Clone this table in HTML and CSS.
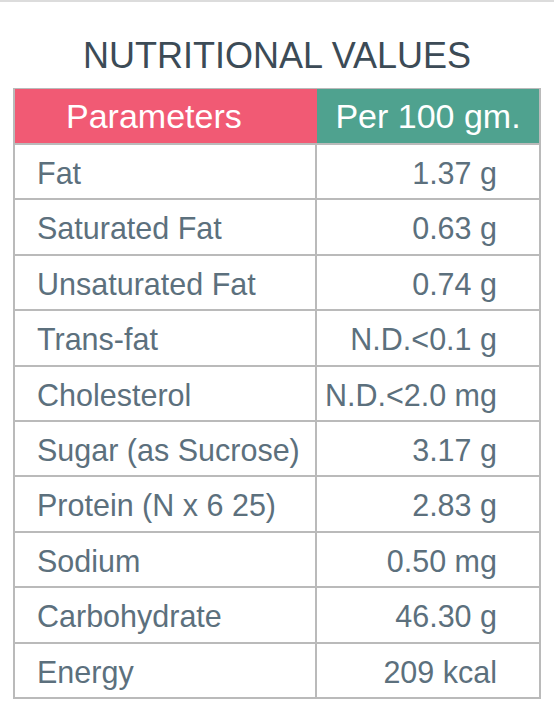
FILE: index.html
```html
<!DOCTYPE html>
<html>
  <head>
    <meta charset="UTF-8" />
    <title>Nutritional Values</title>
    <link rel="stylesheet" href="styles.css">
  </head>
  <body>
    <div class="page">
      <h1 class="titulo">NUTRITIONAL VALUES</h1>
      <div class="tabla">
        <div class="fila cabecera">
          <div class="celda param">Parameters</div>
          <div class="celda valor">Per 100 gm.</div>
        </div>
        <div class="fila">
          <div class="celda param">Fat</div>
          <div class="celda valor">1.37 g</div>
        </div>
        <div class="fila">
          <div class="celda param">Saturated Fat</div>
          <div class="celda valor">0.63 g</div>
        </div>
        <div class="fila">
          <div class="celda param">Unsaturated Fat</div>
          <div class="celda valor">0.74 g</div>
        </div>
        <div class="fila">
          <div class="celda param">Trans-fat</div>
          <div class="celda valor">N.D.&lt;0.1 g</div>
        </div>
        <div class="fila">
          <div class="celda param">Cholesterol</div>
          <div class="celda valor">N.D.&lt;2.0 mg</div>
        </div>
        <div class="fila">
          <div class="celda param">Sugar (as Sucrose)</div>
          <div class="celda valor">3.17 g</div>
        </div>
        <div class="fila">
          <div class="celda param">Protein (N x 6 25)</div>
          <div class="celda valor">2.83 g</div>
        </div>
        <div class="fila">
          <div class="celda param">Sodium</div>
          <div class="celda valor">0.50 mg</div>
        </div>
        <div class="fila">
          <div class="celda param">Carbohydrate</div>
          <div class="celda valor">46.30 g</div>
        </div>
        <div class="fila">
          <div class="celda param">Energy</div>
          <div class="celda valor">209 kcal</div>
        </div>
      </div>
    </div>
  </body>
</html>
```

FILE: styles.css
```css
body {
  margin: 0;
  padding: 0;
  background-color: #ffffff;
  font-family: "Liberation Sans", Arial, sans-serif;
}

.page {
  border-top: 2px solid #dcdcdc;
  padding-top: 34px;
}

.titulo {
  margin: 0;
  font-size: 36px;
  font-weight: normal;
  line-height: 40px;
  text-align: center;
  color: #3c4b56;
}

.tabla {
  width: 528px;
  margin: 12px 0 0 13px;
  border: 2px solid #bababa;
  border-top-width: 1px;
  box-sizing: border-box;
}

.fila {
  display: grid;
  grid-template-columns: 302px 1fr;
  height: 55.4px;
  border-top: 2px solid #bababa;
  box-sizing: border-box;
  font-size: 30.5px;
  line-height: 36px;
  color: #5c707d;
}

.celda {
  padding-top: 10px;
  box-sizing: border-box;
}

.param {
  padding-left: 22px;
  border-right: 2px solid #bababa;
}

.valor {
  padding-right: 42px;
  text-align: right;
}

.cabecera {
  height: 54px;
  border-top: none;
  font-size: 34px;
  line-height: 40px;
  color: #ffffff;
}

.cabecera .celda {
  padding-top: 7px;
}

.cabecera .param {
  background-color: #f15a74;
  padding-left: 51px;
  border-right: none;
}

.cabecera .valor {
  background-color: #4fa28f;
  padding-right: 0;
  text-align: center;
}
```
